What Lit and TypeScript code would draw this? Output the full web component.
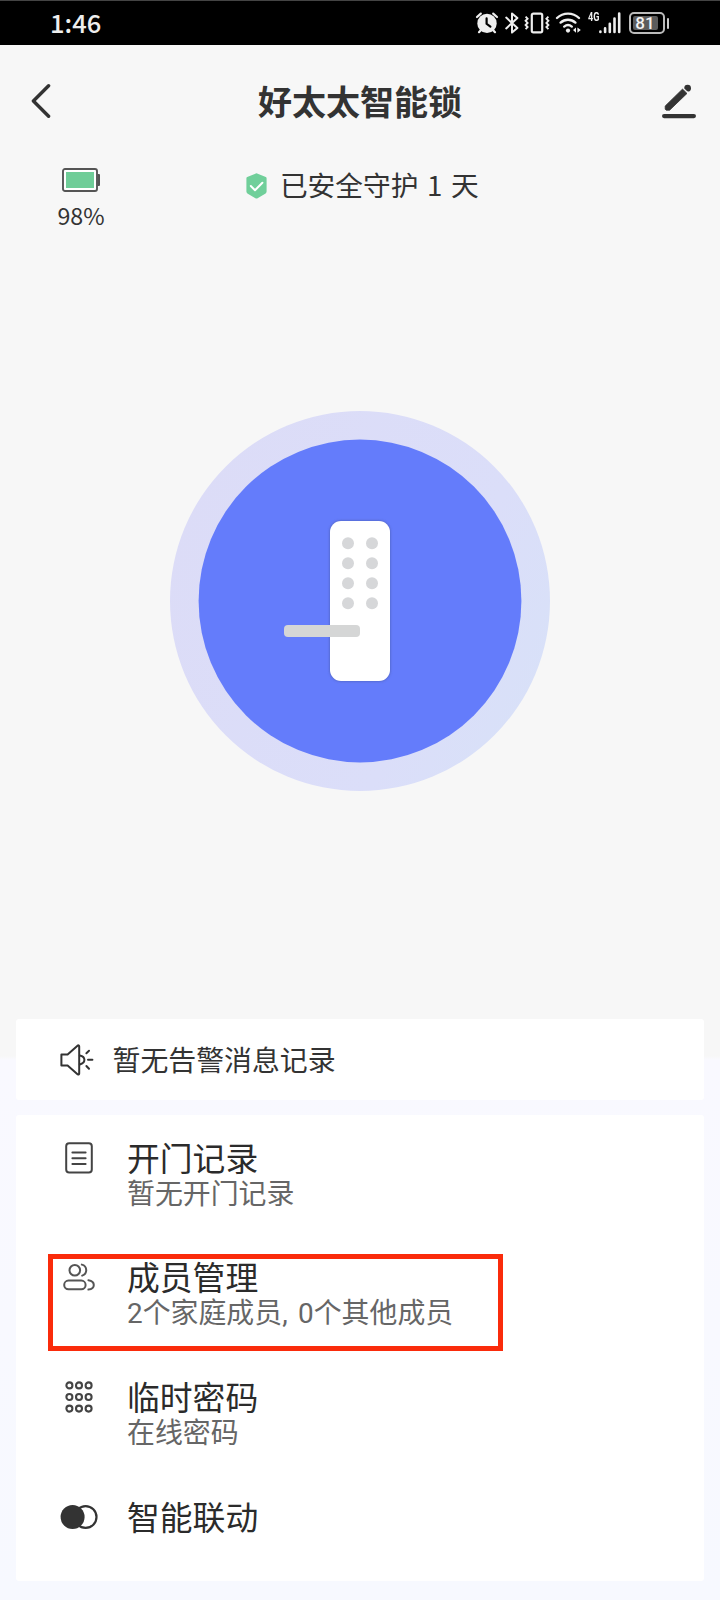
import { LitElement, html, css, svg, type TemplateResult } from "lit";
import { customElement, property } from "lit/decorators.js";

const DARK = "#333";

const alarmIcon = svg`<svg width="24" height="24" viewBox="0 0 24 24" fill="none">
  <path d="M2 6 5.8 2.6M22 6 18.2 2.6M5.8 19.2 4 21.2M18.2 19.2 20 21.2" stroke="#eee" stroke-width="2.2" stroke-linecap="round"/>
  <circle cx="12" cy="12.4" r="9.7" fill="#eee"/>
  <path d="M11.6 7.4v5.4l3.8 2.8" stroke="#000" stroke-width="2.2" stroke-linecap="round"/></svg>`;

const bluetoothIcon = svg`<svg width="16" height="24" viewBox="0 0 16 24" fill="none" stroke="#eee" stroke-width="2" stroke-linejoin="round" stroke-linecap="round">
  <path d="M2.2 6.6 13.4 17 8 21.6V2.4L13.4 7 2.2 17.4"/></svg>`;

const vibrateIcon = svg`<svg width="26" height="24" viewBox="0 0 26 24" fill="none" stroke="#eee">
  <rect x="7.8" y="2.6" width="10.4" height="18.8" rx="1.6" stroke-width="2.2"/>
  <path d="m1.6 5.6 2 2.1-2 2.1 2 2.1-2 2.1 2 2.1-2 2.1M24.4 5.6l-2 2.1 2 2.1-2 2.1 2 2.1-2 2.1 2 2.1" stroke-width="1.9"/></svg>`;

const wifiIcon = svg`<svg width="28" height="24" viewBox="0 0 28 24" fill="none" stroke="#eee" stroke-width="2.4" stroke-linecap="round">
  <path d="M2 7a16 16 0 0 1 22 0M5.6 11.6a11 11 0 0 1 14.8 0M9.2 15.6a6 6 0 0 1 7.6 0"/>
  <circle cx="13" cy="19.6" r="2.1" fill="#eee" stroke="none"/>
  <path d="M21 16.4v5.4l-3-2.8zM22.4 16.4v5.4l3.4-2.8z" fill="#eee" stroke="none"/></svg>`;

const signalIcon = svg`<svg width="22" height="22" viewBox="0 0 22 22" stroke="#eee" stroke-width="2.6" stroke-linecap="round">
  <path d="M1.4 19.6v.4M6.1 16.4V20M10.8 11.8V20M15.5 6.6V20M20.2 1.6V20"/></svg>`;

const backIcon = svg`<svg width="20" height="36" viewBox="0 0 20 36" fill="none" stroke="${DARK}" stroke-width="3.4" stroke-linecap="round" stroke-linejoin="round">
  <path d="M17.6 2.8 2.4 18l15.2 15.2"/></svg>`;

const editIcon = svg`<svg width="36" height="36" viewBox="0 0 36 36">
  <path d="M21.6 6 26 10.4 8.6 27.2H5.2L4.2 26.2V23Z" fill="${DARK}" stroke="${DARK}" stroke-width=".8" stroke-linejoin="round"/>
  <circle cx="26.6" cy="5.2" r="3.4" fill="${DARK}"/>
  <path d="M21.6 4.6 27.6 10.4" stroke="#f7f7f7" stroke-width="1.2"/>
  <rect x="1" y="31" width="34" height="4.2" rx="2.1" fill="${DARK}"/></svg>`;

const batteryIcon = svg`<svg width="38" height="24" viewBox="0 0 38 24">
  <rect x="1" y="1" width="34" height="22" rx="2" fill="#fff" stroke="#555" stroke-width="1.9"/>
  <rect x="4" y="4" width="28" height="16" fill="#6fcd98"/>
  <path d="M35.6 6h1.4a1 1 0 0 1 1 1v10a1 1 0 0 1-1 1H35.6z" fill="#555"/></svg>`;

const shieldIcon = svg`<svg width="21" height="26" viewBox="0 0 21 26" fill="none">
  <path d="M10.5.2 19.8 4q.8.4.8 1.2V18.6q0 1.2-1 1.8L11.6 25.2q-1.1.6-2.2 0L1.4 20.4q-1-.6-1-1.8V5.2Q.4 4.4 1.2 4Z" fill="#70cf9a"/>
  <path d="m4.8 13 4.2 4.2 7.4-7.4" stroke="#fff" stroke-width="2" stroke-linecap="round" stroke-linejoin="round"/></svg>`;

const lockFigure = svg`<svg width="380" height="380" viewBox="0 0 380 380">
  <defs>
    <linearGradient id="halo" x1="0" y1=".3" x2="1" y2=".75">
      <stop offset="0" stop-color="#dcdcf7"/><stop offset=".7" stop-color="#dbdef9"/><stop offset="1" stop-color="#d8e1f8"/>
    </linearGradient>
    <filter id="soft" x="-20%" y="-10%" width="140%" height="120%"><feGaussianBlur stdDeviation="1.5"/></filter>
  </defs>
  <circle cx="190" cy="190" r="190" fill="url(#halo)"/>
  <circle cx="190" cy="190" r="161.4" fill="#647cfb"/>
  <rect x="160" y="110" width="60" height="160" rx="11" fill="#4a5cae" filter="url(#soft)"/>
  <rect x="160" y="110" width="60" height="160" rx="11" fill="#fff"/>
  ${[132.2, 152.2, 172.2, 192.2].map(
    (y) => svg`<circle cx="178" cy="${y}" r="6" fill="#d6d7d9"/><circle cx="202" cy="${y}" r="6" fill="#d6d7d9"/>`
  )}
  <rect x="114" y="214" width="76" height="12" rx="4" fill="#d5d6d6"/></svg>`;

const speakerIcon = svg`<svg width="34" height="32" viewBox="0 0 34 32" fill="none" stroke="${DARK}" stroke-width="2" stroke-linecap="round" stroke-linejoin="round">
  <path d="M1.4 10.6H7.6L17.8 1.4Q19.2 1 19.2 2.4V29.6Q19.2 31 17.8 30.4L7.6 21.6H1.4Z"/>
  <path d="M19.8 11.4Q24.4 12.2 24.4 15.8T19.8 20.4M26.4 9.2 29 6.8M28 15.8H32.4M26.4 22 29 24.8"/></svg>`;

const recordIcon = svg`<svg width="28" height="32" viewBox="0 0 28 32" fill="none" stroke="#444" stroke-width="2" stroke-linecap="round">
  <rect x="1.2" y="1.2" width="25.6" height="29.2" rx="3"/>
  <path d="M7.4 10.4H20.6M7.4 16.2H20.6M7.4 22H20.6"/></svg>`;

const membersIcon = svg`<svg width="32" height="28" viewBox="0 0 32 28" fill="none" stroke="#555" stroke-width="2" stroke-linecap="round">
  <circle cx="11.8" cy="7.2" r="5.3"/>
  <path d="M18.8 1.6A5.7 5.7 0 0 1 19.2 12.6"/>
  <rect x="1.2" y="17.6" width="21.4" height="8.6" rx="4.3"/>
  <path d="M25.4 17.2Q30.8 18 30.8 22T25.4 26.6"/></svg>`;

const keypadIcon = svg`<svg width="28" height="32" viewBox="0 0 28 32" fill="none" stroke="#444" stroke-width="2.1">
  ${[4.4, 16, 27.6].map((y) => [4.4, 14, 23.6].map((x) => svg`<circle cx="${x}" cy="${y}" r="3"/>`))}</svg>`;

const linkageIcon = svg`<svg width="38" height="26" viewBox="0 0 38 26">
  <circle cx="25.6" cy="13" r="10.9" fill="#fff" stroke="${DARK}" stroke-width="2.2"/>
  <circle cx="12.6" cy="13" r="12" fill="${DARK}"/></svg>`;

@customElement("status-bar")
class StatusBar extends LitElement {
  static styles = css`
    :host {
      display: flex;
      height: 45px;
      box-sizing: border-box;
      padding: 0 51px 0 50px;
      border-top: 1px solid #444;
      align-items: center;
      justify-content: space-between;
      background: #000;
      color: #eee;
    }
    svg { display: block; flex: none; }
    .time { font-size: 25.5px; font-weight: 500; line-height: 38px; padding-bottom: 3px; }
    .tray { display: flex; align-items: center; }
    .alarm { margin-right: 5px; }
    .bt { margin-right: 4px; }
    .vibrate { margin-right: 5px; }
    .net {
      width: 12px;
      margin-left: 5px;
      align-self: flex-start;
      font: 700 13px/11px Roboto, sans-serif;
      transform: scaleX(0.7);
      transform-origin: 0 0;
    }
    .signal { margin: 0 8px 0 -1px; }
    .cell {
      width: 36px;
      height: 22px;
      box-sizing: border-box;
      border: 2px solid #bbb;
      border-radius: 5px;
      padding: 2px;
      display: flex;
    }
    .level {
      width: 25px;
      border-radius: 2px;
      background: #5c5c5c;
      color: #f4f4f4;
      font: 500 17px/14px Roboto, sans-serif;
      text-align: center;
    }
    .tip { width: 2.5px; height: 11px; border-radius: 2px; margin-left: 2px; background: #ccc; }
  `;
  render() {
    return html`
      <span class="time">1:46</span>
      <div class="tray">
        <span class="alarm">${alarmIcon}</span>
        <span class="bt">${bluetoothIcon}</span>
        <span class="vibrate">${vibrateIcon}</span>
        <span>${wifiIcon}</span>
        <span class="net">4G</span>
        <span class="signal">${signalIcon}</span>
        <span class="cell"><span class="level">81</span></span>
        <span class="tip"></span>
      </div>`;
  }
}

@customElement("menu-row")
class MenuRow extends LitElement {
  @property({ attribute: false }) icon?: TemplateResult | unknown;
  @property() heading = "";
  @property() detail = "";
  static styles = css`
    :host { display: flex; height: 119.7px; font-family: Roboto, "Noto Sans CJK SC", sans-serif; }
    .icon {
      width: 68px;
      height: 34px;
      margin: 0 14px 0 29px;
      display: flex;
      align-items: center;
      justify-content: center;
    }
    svg { display: block; }
    .text { padding-top: 2px; }
    .heading { font-size: 32.8px; line-height: 34px; height: 35px; color: #2b2b2b; }
    .detail { font-size: 27.9px; line-height: 34px; color: #666; word-spacing: 3.5px; }
  `;
  render() {
    return html`
      <div class="icon">${this.icon}</div>
      <div class="text">
        <div class="heading">${this.heading}</div>
        <div class="detail">${this.detail}</div>
      </div>`;
  }
}

@customElement("app-root")
class AppRoot extends LitElement {
  static styles = css`
    :host {
      display: block;
      width: 720px;
      height: 1600px;
      overflow: hidden;
      font-family: "Noto Sans CJK SC", sans-serif;
      color: #333;
      background: linear-gradient(#f7f7f7 0 1056px, #f9f9ff 1060px, #f7f9ff 1600px);
    }
    svg { display: block; }
    .nav {
      display: grid;
      grid-template-columns: 60px 1fr 60px;
      align-items: center;
      height: 112px;
      padding: 0 23px 0 31px;
    }
    .title { margin: 0; padding: 0 8px 1px 0; text-align: center; font-size: 34px; font-weight: 700; line-height: 44px; }
    .edit { justify-self: end; }
    .state {
      display: grid;
      grid-template-columns: 162px 1fr 162px;
      height: 84px;
      padding-top: 11px;
      box-sizing: border-box;
    }
    .battery { display: flex; flex-direction: column; align-items: center; gap: 6px; font-size: 23.2px; line-height: 34px; }
    .guard { display: flex; justify-content: center; gap: 12.5px; height: 36px; padding-left: 5px; font-size: 27.7px; line-height: 32px; word-spacing: 2.4px; }
    .guard svg { margin-top: 5px; }
    .stage { display: flex; justify-content: center; height: 778px; padding-top: 170px; box-sizing: border-box; }
    .cards { display: grid; gap: 15px; padding: 0 16px; }
    .card { background: #fff; border-radius: 3px; }
    .notice { display: flex; align-items: center; gap: 18.5px; height: 81px; padding-left: 44px; font-size: 27.9px; line-height: 40px; }
    .notice span { padding-bottom: 1px; }
    .menu { height: 466px; padding-top: 25.5px; box-sizing: border-box; position: relative; }
    .marker {
      position: absolute;
      left: 31.5px;
      top: 139px;
      width: 455px;
      height: 97px;
      box-sizing: border-box;
      border: 5px solid #fa2b0b;
    }
  `;
  render() {
    return html`
      <status-bar></status-bar>
      <header class="nav">
        <span>${backIcon}</span>
        <h1 class="title">好太太智能锁</h1>
        <span class="edit">${editIcon}</span>
      </header>
      <section class="state">
        <div class="battery">${batteryIcon}<span>98%</span></div>
        <div class="guard">${shieldIcon}<span>已安全守护 1 天</span></div>
      </section>
      <section class="stage">${lockFigure}</section>
      <section class="cards">
        <div class="card notice">${speakerIcon}<span>暂无告警消息记录</span></div>
        <div class="card menu">
          <menu-row .icon=${recordIcon} heading="开门记录" detail="暂无开门记录"></menu-row>
          <menu-row .icon=${membersIcon} heading="成员管理" detail="2个家庭成员, 0个其他成员"></menu-row>
          <menu-row .icon=${keypadIcon} heading="临时密码" detail="在线密码"></menu-row>
          <menu-row .icon=${linkageIcon} heading="智能联动"></menu-row>
          <div class="marker"></div>
        </div>
      </section>`;
  }
}
